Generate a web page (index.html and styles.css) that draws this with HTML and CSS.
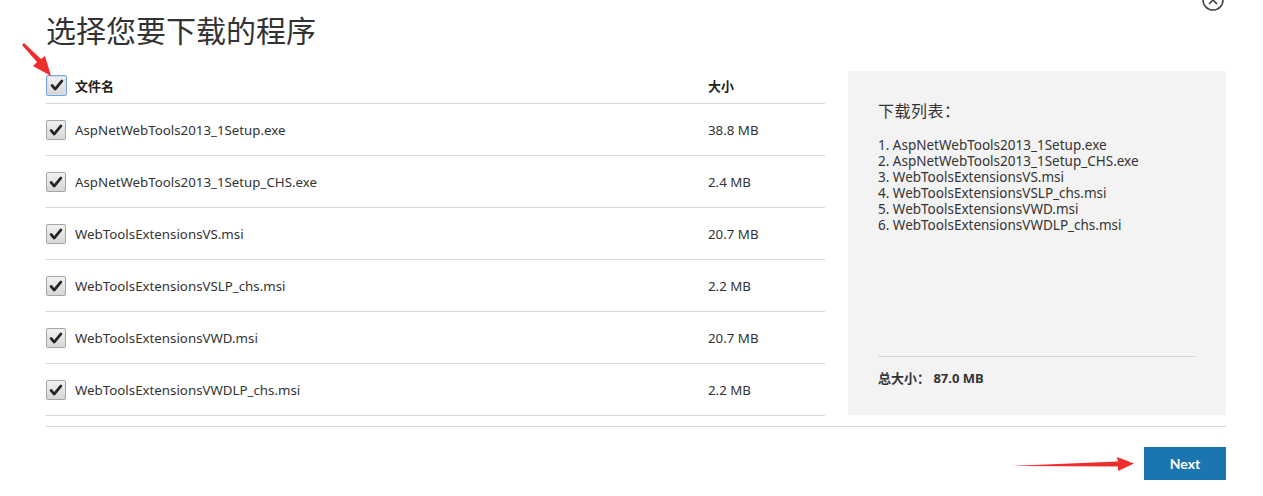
FILE: index.html
```html
<!DOCTYPE html>
<html lang="zh-CN">
<head>
<meta charset="utf-8">
<title>选择您要下载的程序</title>
<link rel="stylesheet" href="styles.css">
</head>
<body>
<div class="page">
  <svg class="close" width="24" height="24" viewBox="0 0 24 24"><circle cx="12" cy="12" r="10" fill="none" stroke="#444" stroke-width="1.6"/><path d="M8 8 L16 16 M16 8 L8 16" stroke="#444" stroke-width="1.6" fill="none"/></svg>
  <h1 class="title">选择您要下载的程序</h1>
  <div class="main">
    <div class="files">
      <div class="row head">
        <span class="cb focus"><svg viewBox="0 0 20 20" width="20" height="20"><path d="M4.5 10.5 L8 14.5 L15.5 5.5" fill="none" stroke="#222" stroke-width="3" stroke-linecap="round" stroke-linejoin="round"/></svg></span>
        <span class="name">文件名</span>
        <span class="size">大小</span>
      </div>
      <div class="row">
        <span class="cb"><svg viewBox="0 0 20 20" width="20" height="20"><path d="M4.5 10.5 L8 14.5 L15.5 5.5" fill="none" stroke="#222" stroke-width="3" stroke-linecap="round" stroke-linejoin="round"/></svg></span>
        <span class="name">AspNetWebTools2013_1Setup.exe</span>
        <span class="size">38.8 MB</span>
      </div>
      <div class="row">
        <span class="cb"><svg viewBox="0 0 20 20" width="20" height="20"><path d="M4.5 10.5 L8 14.5 L15.5 5.5" fill="none" stroke="#222" stroke-width="3" stroke-linecap="round" stroke-linejoin="round"/></svg></span>
        <span class="name">AspNetWebTools2013_1Setup_CHS.exe</span>
        <span class="size">2.4 MB</span>
      </div>
      <div class="row">
        <span class="cb"><svg viewBox="0 0 20 20" width="20" height="20"><path d="M4.5 10.5 L8 14.5 L15.5 5.5" fill="none" stroke="#222" stroke-width="3" stroke-linecap="round" stroke-linejoin="round"/></svg></span>
        <span class="name">WebToolsExtensionsVS.msi</span>
        <span class="size">20.7 MB</span>
      </div>
      <div class="row">
        <span class="cb"><svg viewBox="0 0 20 20" width="20" height="20"><path d="M4.5 10.5 L8 14.5 L15.5 5.5" fill="none" stroke="#222" stroke-width="3" stroke-linecap="round" stroke-linejoin="round"/></svg></span>
        <span class="name">WebToolsExtensionsVSLP_chs.msi</span>
        <span class="size">2.2 MB</span>
      </div>
      <div class="row">
        <span class="cb"><svg viewBox="0 0 20 20" width="20" height="20"><path d="M4.5 10.5 L8 14.5 L15.5 5.5" fill="none" stroke="#222" stroke-width="3" stroke-linecap="round" stroke-linejoin="round"/></svg></span>
        <span class="name">WebToolsExtensionsVWD.msi</span>
        <span class="size">20.7 MB</span>
      </div>
      <div class="row">
        <span class="cb"><svg viewBox="0 0 20 20" width="20" height="20"><path d="M4.5 10.5 L8 14.5 L15.5 5.5" fill="none" stroke="#222" stroke-width="3" stroke-linecap="round" stroke-linejoin="round"/></svg></span>
        <span class="name">WebToolsExtensionsVWDLP_chs.msi</span>
        <span class="size">2.2 MB</span>
      </div>
    </div>
    <div class="panel">
      <div class="panel-title">下载列表：</div>
      <ol class="dl-list">
        <li>1. AspNetWebTools2013_1Setup.exe</li>
        <li>2. AspNetWebTools2013_1Setup_CHS.exe</li>
        <li>3. WebToolsExtensionsVS.msi</li>
        <li>4. WebToolsExtensionsVSLP_chs.msi</li>
        <li>5. WebToolsExtensionsVWD.msi</li>
        <li>6. WebToolsExtensionsVWDLP_chs.msi</li>
      </ol>
      <div class="total">总大小： 87.0 MB</div>
    </div>
  </div>
  <div class="footer">
    <button class="next">Next</button>
  </div>
  <svg class="arrow arrow-a" width="40" height="40" viewBox="0 0 40 40"><path d="M4 3 L19 20 L15 24 L33 34 L27 14 L23 17 L6 1 Z" fill="#ee2e2e"/></svg>
  <svg class="arrow arrow-b" width="130" height="20" viewBox="0 0 130 20"><path d="M2 12 L108 7.5 L107 3 L124 9.5 L108 17 L108 12.5 Z" fill="#ee2e2e"/></svg>
</div>
</body>
</html>
```
FILE: styles.css
```css
html, body {
  margin: 0;
  padding: 0;
  background: #fff;
}
body {
  font-family: "Noto Sans", "Noto Sans CJK SC", sans-serif;
  color: #333;
}
.page {
  position: relative;
  width: 1263px;
  height: 496px;
  overflow: hidden;
  padding: 0 37px 0 46px;
  box-sizing: border-box;
}
.close {
  position: absolute;
  left: 1201px;
  top: -12px;
}
.title {
  margin: 0;
  padding-top: 8px;
  height: 71px;
  box-sizing: border-box;
  font-family: "Noto Sans CJK SC", sans-serif;
  font-weight: 400;
  font-size: 30px;
  line-height: 42px;
  color: #333;
}
.main {
  display: flex;
  gap: 23px;
}
.files {
  width: 779px;
}
.row {
  display: flex;
  align-items: center;
  height: 52px;
  border-bottom: 1px solid #d6d6d6;
  box-sizing: border-box;
  font-size: 13.3px;
  color: #333;
}
.row.head {
  height: 33px;
  font-family: "Noto Sans CJK SC", sans-serif;
  font-weight: 700;
  font-size: 13px;
  color: #222;
  padding-bottom: 4px;
}
.cb {
  width: 18px;
  height: 18px;
  border: 1px solid #a6a6a6;
  border-radius: 2px;
  background: linear-gradient(#f2f2f2, #d6d6d6);
  display: flex;
  align-items: center;
  justify-content: center;
  flex: none;
  margin-right: 9px;
}
.cb svg {
  width: 18px;
  height: 18px;
}
.cb.focus {
  width: 19px;
  height: 19px;
  border-color: #7aa3d6;
  box-shadow: inset 0 0 0 1px #cfe0f5;
  margin-right: 8px;
}
.name {
  width: 633px;
}
.size {
  flex: 1;
}
.panel {
  width: 378px;
  height: 344px;
  background: #f3f3f3;
  box-sizing: border-box;
  padding: 27px 30px 29px 30px;
  display: flex;
  flex-direction: column;
}
.panel-title {
  font-family: "Noto Sans CJK SC", sans-serif;
  font-size: 16px;
  line-height: 24px;
  letter-spacing: 0.5px;
  color: #333;
}
.dl-list {
  list-style: none;
  margin: 15px 0 0 0;
  padding: 0;
  font-size: 13.5px;
  line-height: 16px;
  color: #333;
}
.total {
  margin-top: auto;
  border-top: 1px solid #d6d6d6;
  padding-top: 13px;
  font-family: "Noto Sans", "Noto Sans CJK SC", sans-serif;
  font-weight: 700;
  font-size: 13px;
  line-height: 16px;
  color: #333;
}
.footer {
  margin-top: 10px;
  border-top: 1px solid #d6d6d6;
  display: flex;
  justify-content: flex-end;
  padding-top: 20px;
}
.next {
  width: 82px;
  height: 33px;
  border: 0;
  background: #1b75b0;
  color: #fff;
  font-family: Lato, sans-serif;
  font-weight: 700;
  font-size: 14px;
  padding: 0;
}
.arrow {
  position: absolute;
}
.arrow-a {
  left: 18px;
  top: 42px;
}
.arrow-b {
  left: 1010px;
  top: 454px;
}
```
